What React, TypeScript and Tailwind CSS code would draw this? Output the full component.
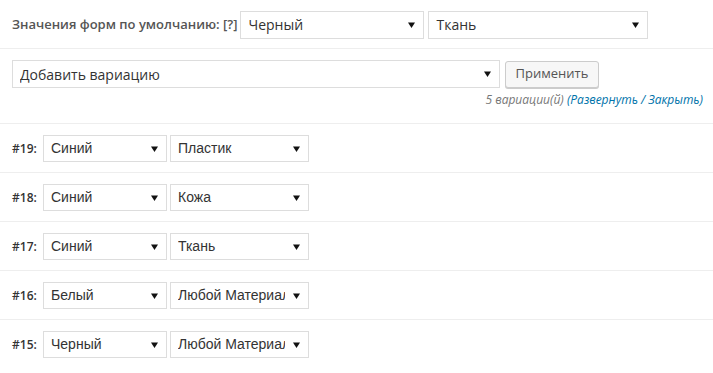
import React from "react"

const open = { fontFamily: '"Open Sans", "Liberation Sans", sans-serif' }
const arial = { fontFamily: '"Liberation Sans", Arial, sans-serif' }

function Arrow() {
  return (
    <svg width="7" height="6" viewBox="0 0 7 6" className="shrink-0">
      <path d="M0 0.5 L7 0.5 L3.5 6 Z" fill="#111" />
    </svg>
  )
}

function FakeSelect({ value, className, font, size }: { value: string; className: string; font: React.CSSProperties; size: string }) {
  return (
    <div className={`flex items-center border border-[#dddddd] bg-white pl-[7px] pr-[8px] overflow-hidden ${className}`}>
      <span className={`flex-1 whitespace-nowrap overflow-hidden text-[#333] mr-[8px] ${size}`} style={font}>
        {value}
      </span>
      <Arrow />
    </div>
  )
}

const rows = [
  { id: 19, color: "Синий", mat: "Пластик" },
  { id: 18, color: "Синий", mat: "Кожа" },
  { id: 17, color: "Синий", mat: "Ткань" },
  { id: 16, color: "Белый", mat: "Любой Материал" },
  { id: 15, color: "Черный", mat: "Любой Материал" },
]

export default function App() {
  return (
    <div className="w-[713px] h-[373px] bg-white overflow-hidden">
      <div className="flex items-center h-[48px] pl-[12px] pt-[1px]">
        <span className="text-[13px] font-semibold text-[#555] mr-[3px]" style={open}>
          Значения форм по умолчанию: [?]
        </span>
        <FakeSelect value="Черный" className="w-[184px] h-[28px] mr-[4px]" font={open} size="text-[14px]" />
        <FakeSelect value="Ткань" className="w-[220px] h-[28px]" font={open} size="text-[14px]" />
      </div>
      <div className="border-t border-[#eeeeee] h-[75px] pt-[11px] px-[10px]">
        <div className="flex items-center pl-[2px]">
          <FakeSelect value="Добавить вариацию" className="w-[488px] h-[28px] mr-[5px]" font={open} size="text-[14px]" />
          <div
            className="h-[27px] w-[94px] flex items-center justify-center border border-[#cccccc] bg-[#f7f7f7] rounded-[3px] text-[13px] text-[#555] shadow-[0_1px_0_#cccccc]"
            style={open}
          >
            Применить
          </div>
        </div>
        <div className="text-right text-[12px] italic mt-[3px] text-[#777]" style={open}>
          5 вариации(й) <span className="text-[#0073aa]">(Развернуть</span>{" "}
          <span className="text-[#0073aa]">/ Закрыть)</span>
        </div>
      </div>
      {rows.map((r) => (
        <div key={r.id} className="border-t border-[#eeeeee] h-[49px] flex items-start pt-[11px] pl-[12px]">
          <div className="flex items-center h-[27px]">
            <span className="text-[12px] font-semibold text-[#333] w-[31px]" style={open}>
              #{r.id}:
            </span>
            <FakeSelect value={r.color} className="w-[124px] h-[27px] mr-[3px]" font={arial} size="text-[14px]" />
            <FakeSelect value={r.mat} className="w-[139px] h-[27px]" font={arial} size="text-[14px]" />
          </div>
        </div>
      ))}
    </div>
  )
}
